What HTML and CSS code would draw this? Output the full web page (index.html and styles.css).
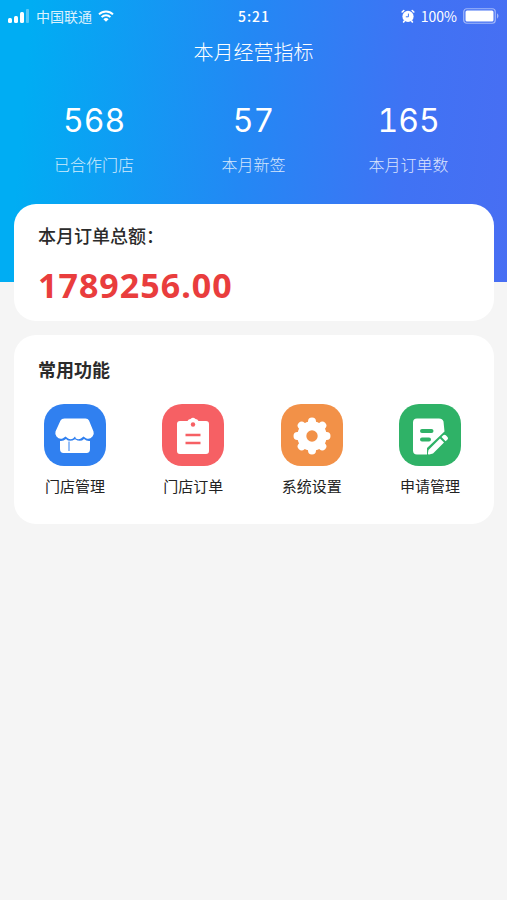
FILE: index.html
```html
<!DOCTYPE html>
<html lang="zh-CN">
<head>
<meta charset="utf-8">
<meta name="viewport" content="width=device-width, initial-scale=1">
<title>本月经营指标</title>
<link rel="stylesheet" href="styles.css">
</head>
<body>
<header class="hero">
  <div class="status">
    <div class="status-side">
      <svg class="signal" viewBox="0 0 22 16" width="22" height="16" aria-hidden="true">
        <rect x="0" y="10" width="4" height="5" rx="1.5"/>
        <rect x="6" y="8" width="4" height="7" rx="1.5"/>
        <rect x="12" y="4" width="4" height="11" rx="1.5"/>
        <rect x="18" y="1" width="3" height="14" rx="1" opacity=".35"/>
      </svg>
      <span class="carrier">中国联通</span>
      <svg viewBox="0 0 16 12" width="16" height="12" aria-hidden="true">
        <path d="M1 4.4a10 10 0 0 1 14 0M3.6 7.1a6.3 6.3 0 0 1 8.8 0" fill="none" stroke="currentColor" stroke-width="2"/>
        <path d="M8 11.8 5.4 9.2a3.8 3.8 0 0 1 5.2 0z"/>
      </svg>
    </div>
    <span class="time">5:21</span>
    <div class="status-side status-right">
      <svg viewBox="0 0 14 14" width="14" height="14" aria-hidden="true">
        <circle cx="7" cy="7.4" r="5.6"/>
        <path d="M1.200 3 2.800 1.500M12.800 3 11.200 1.500M3.300 12l-.7 1M10.700 12l.7 1" stroke="currentColor" stroke-width="1.6" stroke-linecap="round"/>
        <path d="M7.400 4.600v3.200H4.800" fill="none" stroke="#3d78f4" stroke-width="1"/>
      </svg>
      <span class="percent">100%</span>
      <svg viewBox="0 0 37 16" width="37" height="16" aria-hidden="true">
        <rect x=".75" y=".75" width="31.5" height="14.5" rx="3" fill="none" stroke="currentColor" stroke-width="1.2" opacity=".5"/>
        <rect x="2.5" y="2.5" width="28" height="11" rx="1.5"/>
        <path d="M34 5.3q3 2.7 0 5.4z" opacity=".5"/>
      </svg>
    </div>
  </div>
  <h1 class="title">本月经营指标</h1>
  <dl class="stats">
    <div class="stat"><dt>已合作门店</dt><dd>568</dd></div>
    <div class="stat"><dt>本月新签</dt><dd>57</dd></div>
    <div class="stat"><dt>本月订单数</dt><dd>165</dd></div>
  </dl>
</header>
<main class="content">
  <section class="card total">
    <h2>本月订单总额：</h2>
    <p class="amount">1789256.00</p>
  </section>
  <section class="card">
    <h2>常用功能</h2>
    <nav class="menu">
      <a href="#stores">
        <svg class="icon blue" viewBox="0 0 62 62" aria-hidden="true">
          <path d="M20.500 14.500h21q2.500 0 3.500 2l4.500 11q1 3-1 5-3 3.400-6.500 1.700l-2.500-1.600-2.600 1.800q-2.700 1.600-5 0L31 32.600l-1.900 1.800q-2.300 1.600-5 0l-2.600-1.800-2.500 1.600q-3.500 1.700-6.500-1.700-1.800-2-1-5l5-11q1-2 4-2z"/>
          <path d="M16 37q3.200.5 6-2 3.600 3.600 9 .2 5.400 3.400 9-.2 2.800 2.500 6 2v8q0 4-3.500 4h-23q-3.500 0-3.500-4z"/>
          <path class="mark" d="M25 37.500v9.500"/>
        </svg>
        <span>门店管理</span>
      </a>
      <a href="#orders">
        <svg class="icon red" viewBox="0 0 62 62" aria-hidden="true">
          <path d="M18 17h7.500q1-2 3-2 2.500-2.500 5 0 2 0 3 2H44q3 0 3 3v27q0 3-3 3H18q-3 0-3-3V20q0-3 3-3z"/>
          <circle class="hole" cx="31" cy="20.500" r="2.200"/>
          <path class="mark thick" d="M23.500 31h15M23.500 39h15"/>
        </svg>
        <span>门店订单</span>
      </a>
      <a href="#settings">
        <svg class="icon orange" viewBox="0 0 62 62" aria-hidden="true">
          <circle cx="31" cy="32" r="14.800"/>
          <path stroke="currentColor" stroke-width="8" stroke-linecap="round" d="M31 17.500v29M16.500 32h29M20.700 21.700l20.600 20.600M20.700 42.300l20.600-20.600"/>
          <circle class="hole" cx="31" cy="32" r="5.700"/>
        </svg>
        <span>系统设置</span>
      </a>
      <a href="#requests">
        <svg class="icon green" viewBox="0 0 62 62" aria-hidden="true">
          <path d="M18 14.500h22q3.500 0 4.500 3l1 10L28 44v6.500H18q-4 0-4-4v-28q0-4 4-4z"/>
          <path class="mark thick bar" d="M23 27h9.500M23 35.500h7"/>
          <path d="m29.500 46 11.500-11.600 4 4L34 49.400l-3.800 1.100q-1.500.2-1.300-1.300zM42.500 33l1.700-1.700q1.300-1.200 2.600 0l1.700 1.700q1.200 1.200 0 2.400l-1.900 1.800z"/>
        </svg>
        <span>申请管理</span>
      </a>
    </nav>
  </section>
</main>
</body>
</html>
```
FILE: styles.css
```css
* {
  box-sizing: border-box;
}

body {
  margin: 0;
  min-height: 100vh;
  background: #f5f5f5;
  color: #2b2b2b;
  font-family: "Noto Sans CJK SC", sans-serif;
}

h1, h2, p, dl, dd {
  margin: 0;
}

svg {
  fill: currentColor;
  flex: none;
}

.hero {
  min-height: 282px;
  padding-bottom: 106px;
  background: linear-gradient(95deg, #00adf3 6%, #2388f4 48%, #3f73f4 78%, #486ef3);
  color: #fff;
}

.status {
  display: grid;
  grid-template-columns: 1fr auto 1fr;
  align-items: center;
  height: 32px;
  padding: 0 7px 0 8px;
  font-size: 14px;
}

.status-side {
  display: flex;
  align-items: center;
  gap: 6px;
}

.status-right {
  justify-content: flex-end;
}

.carrier {
  opacity: .85;
}

.time {
  font-weight: 500;
  letter-spacing: 1px;
}

.title {
  font-size: 20px;
  font-weight: 300;
  line-height: 40px;
  text-align: center;
}

.stats {
  display: grid;
  grid-template-columns: 160fr 159fr 151fr;
  padding: 28px 23px 0 14px;
}

.stat {
  display: flex;
  flex-direction: column-reverse;
  gap: 10px;
  text-align: center;
}

.stat dt {
  font-size: 16px;
  font-weight: 300;
  line-height: 24px;
  opacity: .8;
}

.stat dd {
  font-family: Inter, sans-serif;
  font-size: 32px;
  font-variant-numeric: tabular-nums;
  line-height: 42px;
}

.content {
  display: grid;
  gap: 14px;
  margin-top: -78px;
  padding: 0 13px 0 14px;
}

.card {
  padding: 20px 24px 26px;
  border-radius: 22px;
  background: #fff;
}

.card h2 {
  font-size: 18px;
  font-weight: 700;
  line-height: 28px;
}

.total {
  padding: 17px 24px 12px;
}

.total h2 {
  font-weight: 500;
}

.amount {
  margin-top: 12px;
  color: #e93d3d;
  font-family: "Noto Sans", sans-serif;
  font-size: 34px;
  font-weight: 700;
  line-height: 48px;
  letter-spacing: 1px;
}

.menu {
  display: flex;
  justify-content: space-between;
  margin-top: 21px;
  padding: 0 8px 0 5px;
}

.menu a {
  display: flex;
  flex-direction: column;
  align-items: center;
  gap: 8px;
  width: 64px;
  color: #222;
  font-size: 15px;
  line-height: 24px;
  text-decoration: none;
  white-space: nowrap;
}

.icon {
  width: 62px;
  height: 62px;
  border-radius: 20px;
  background: var(--tone);
  color: #fff;
}

.blue { --tone: #3080f0; }
.red { --tone: #f66064; }
.orange { --tone: #f29148; }
.green { --tone: #2fb267; }

.hole {
  fill: var(--tone);
}

.mark {
  fill: none;
  stroke: var(--tone);
  stroke-width: 1;
}

.thick {
  stroke-width: 2.5px;
}

.bar {
  stroke-width: 4px;
  stroke-linecap: round;
}
```
